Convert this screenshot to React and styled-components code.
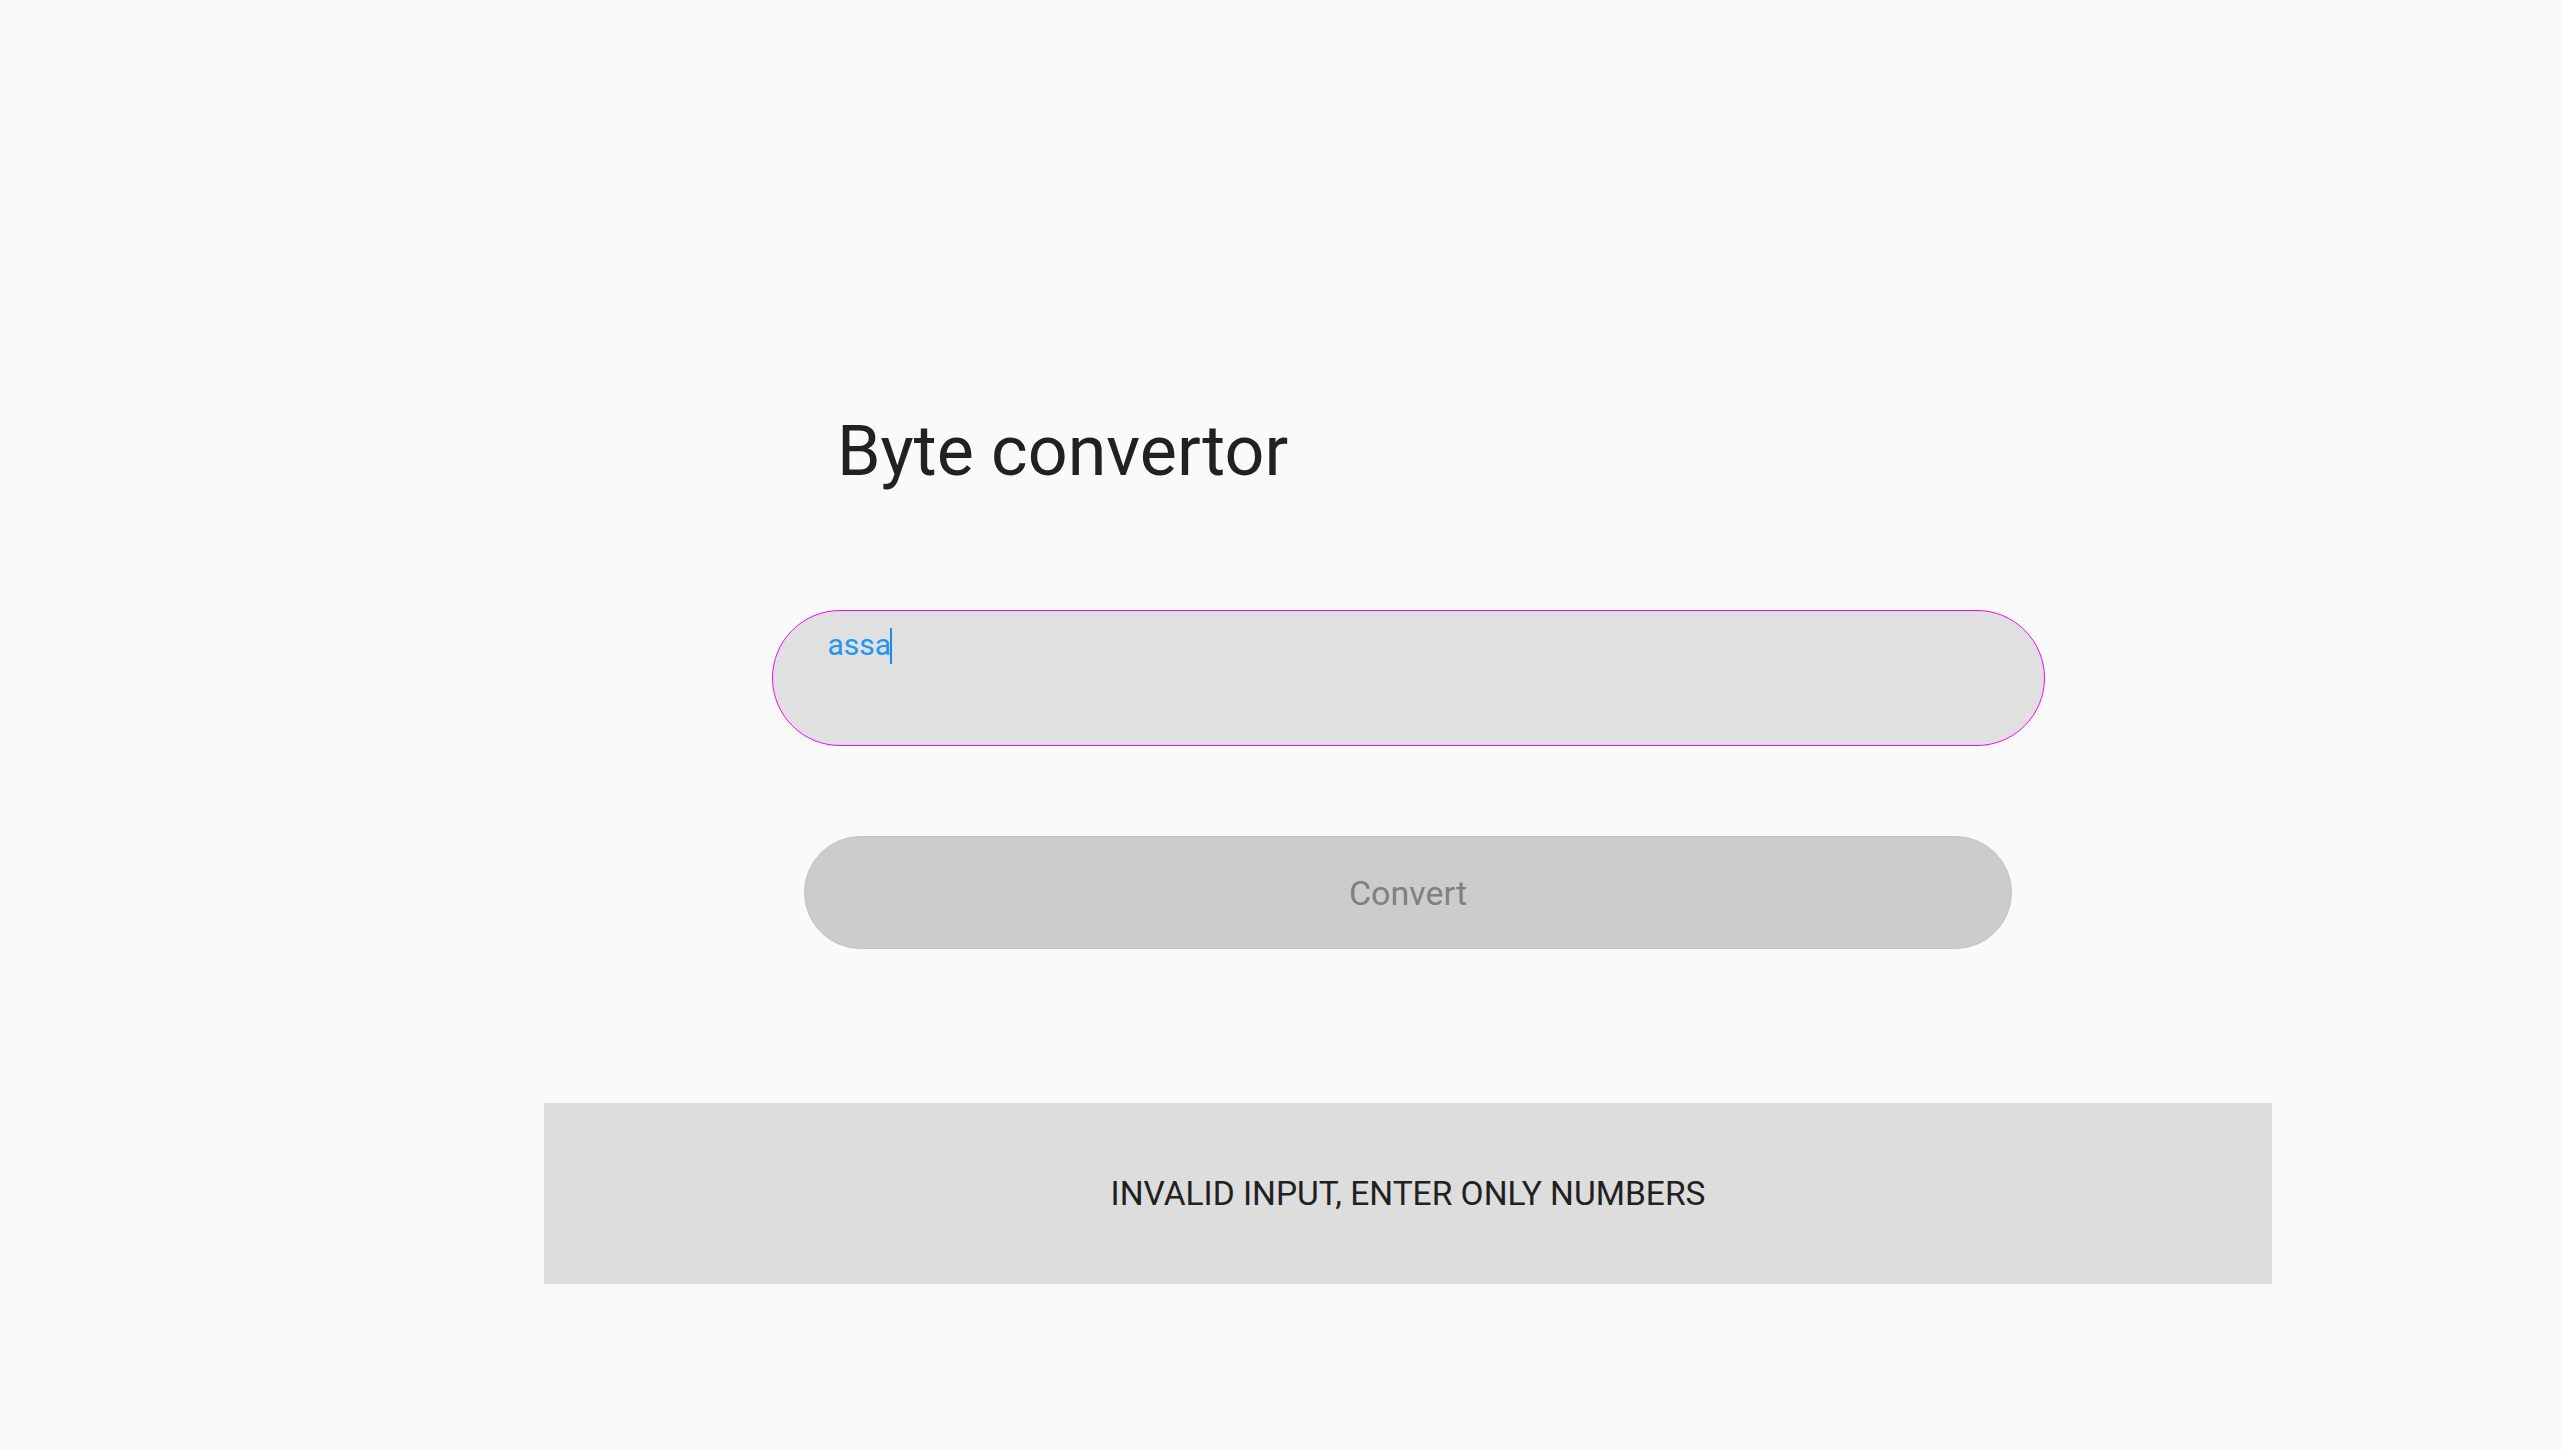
import styled, { createGlobalStyle } from "styled-components";

const Global = createGlobalStyle`
  html, body {
    margin: 0;
    padding: 0;
    background: #fafafa;
    font-family: Roboto, "Noto Sans", Arial, sans-serif;
  }
`;

const Page = styled.div`
  min-height: 1450px;
  box-sizing: border-box;
  padding: 409px 0 0 544px;
`;

const Column = styled.main`
  width: 1728px;
  display: flex;
  flex-direction: column;
  align-items: center;
`;

const Title = styled.h1`
  align-self: flex-start;
  margin: 0 0 0 293px;
  font-size: 70px;
  line-height: 84px;
  font-weight: 400;
  color: #212121;
`;

const Field = styled.div`
  box-sizing: border-box;
  width: 1273px;
  height: 136px;
  margin-top: 117px;
  padding: 15px 55px 0;
  background: #e0e0e0;
  border: 1px solid #f0f;
  border-radius: 68px;
  font-size: 30px;
  line-height: 38px;
  color: #2196f3;
  display: flex;
  align-items: flex-start;
`;

const Caret = styled.span`
  display: inline-block;
  width: 2px;
  height: 36px;
  margin: 2px 0 0 -1px;
  background: #1e88e5;
`;

const Button = styled.button`
  box-sizing: border-box;
  width: 1208px;
  height: 113px;
  margin-top: 90px;
  border: 1px solid #c2c2c2;
  border-radius: 57px;
  background: #cccccc;
  color: #808080;
  font-family: inherit;
  font-size: 34px;
  cursor: default;
`;

const Result = styled.section`
  align-self: stretch;
  height: 181px;
  margin-top: 154px;
  background: #dddddd;
  display: flex;
  align-items: center;
  justify-content: center;
  font-size: 33.5px;
  color: #212121;
`;

export default function App() {
  return (
    <Page>
      <Global />
      <Column>
        <Title>Byte convertor</Title>
        <Field role="textbox">
          assa
          <Caret />
        </Field>
        <Button type="button" disabled>
          Convert
        </Button>
        <Result>INVALID INPUT, ENTER ONLY NUMBERS</Result>
      </Column>
    </Page>
  );
}
